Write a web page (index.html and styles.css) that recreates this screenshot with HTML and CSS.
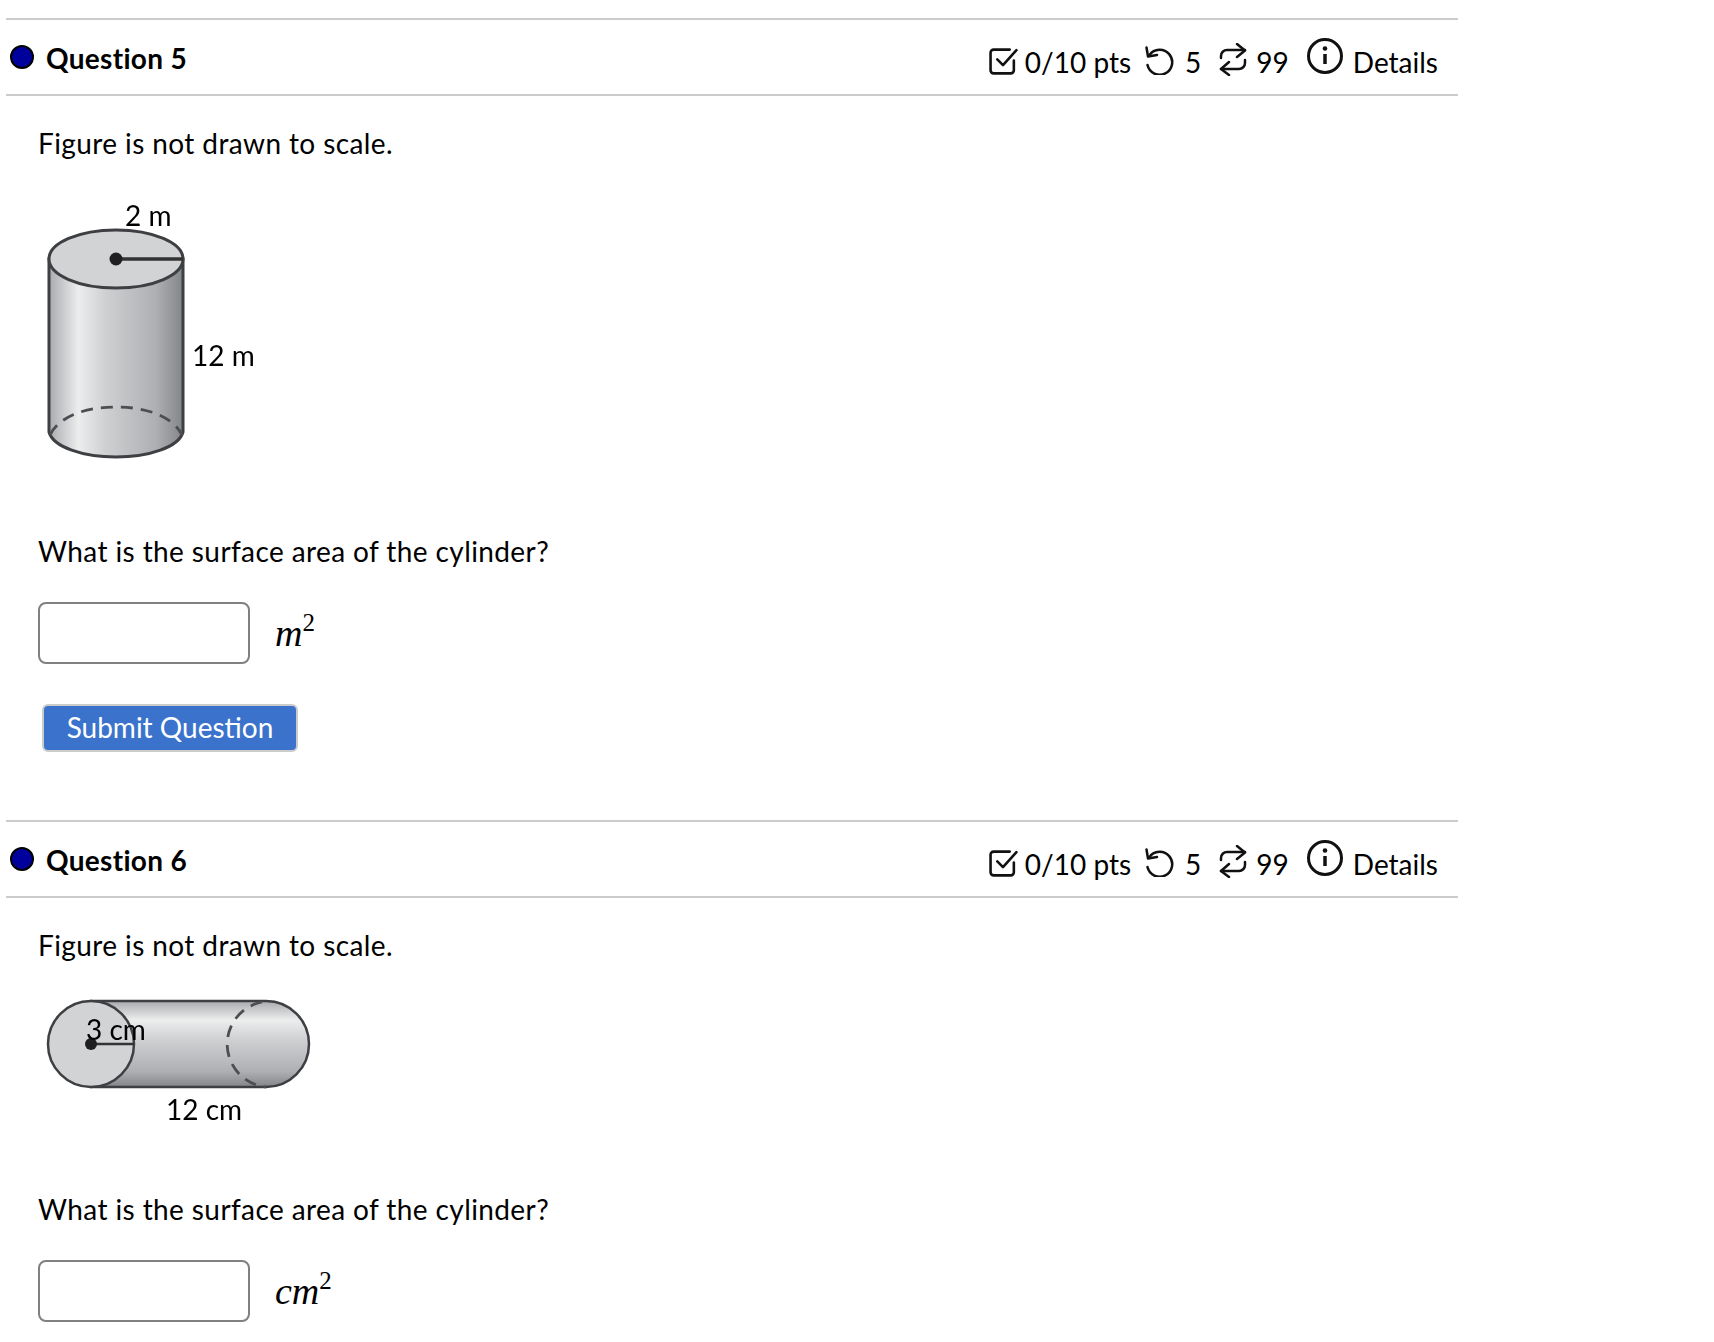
FILE: index.html
```html
<!DOCTYPE html>
<html lang="en">
<head>
<meta charset="utf-8">
<title>Questions</title>
<link rel="stylesheet" href="styles.css">
</head>
<body>
<main class="page">
  <section class="question">
    <header class="qhead">
      <h2 class="qtitle"><span class="dot"></span>Question 5</h2>
      <div class="meta">
        <svg class="ic ic-check" viewBox="0 0 28 28"><path d="M24 13v9.500a3 3 0 0 1-3 3H4.500a3 3 0 0 1-3-3V5.500a3 3 0 0 1 3-3H20"/><path d="M8 12l5.500 5.500L26.500 3"/></svg>
        <span class="m1">0/10 pts</span>
        <svg class="ic ic-hist" viewBox="0 0 32 30"><path d="M6.500 10A12.500 12.500 0 1 1 4.500 20"/><path d="M3.500 2.500L5 11.500l9-1.500"/></svg>
        <span class="m2">5</span>
        <svg class="ic ic-rep" viewBox="0 0 28 33"><path d="M2 15v-2a6 6 0 0 1 6-6h18"/><path d="M18 1l8 6.500-8 6.500"/><path d="M26 17v3a6 6 0 0 1-6 6H2"/><path d="M10 19l-8 7 8 6"/></svg>
        <span class="m3">99</span>
        <svg class="ic ic-info" viewBox="0 0 36 36"><circle cx="18" cy="18" r="16.5"/><path class="ib" d="M18 16v10"/><circle class="id" cx="18" cy="10.500" r="2.300"/></svg>
        <span class="m4">Details</span>
      </div>
    </header>
    <div class="qbody">
      <p class="line">Figure is not drawn to scale.</p>
      <svg class="fig fig-a" viewBox="0 -6 230 276">
        <defs>
          <linearGradient id="cylv" x1="0" x2="1" y1="0" y2="0">
            <stop offset="0" stop-color="#a9abae"/><stop offset=".22" stop-color="#eceded"/><stop offset=".42" stop-color="#cfd0d2"/><stop offset=".8" stop-color="#adafb2"/><stop offset="1" stop-color="#838588"/>
          </linearGradient>
        </defs>
        <path class="body" d="M11 59V232C15 247 45 257 78 257S141 247 145 232V59Z" fill="url(#cylv)"/>
        <ellipse class="cap" cx="78" cy="59" rx="67" ry="29"/>
        <path class="dash" d="M12 235C22 215 50 207 78 207S134 215 144 235"/>
        <path class="rad" d="M78 59H145"/>
        <circle class="pin" cx="78" cy="59" r="6.500"/>
        <text class="lbl" x="87" y="26">2 m</text>
        <text class="lbl" x="154" y="166">12 m</text>
      </svg>
      <p class="line ask ask-a">What is the surface area of the cylinder?</p>
      <div class="answer">
        <input class="box" type="text" aria-label="Answer">
        <span class="math">m<sup>2</sup></span>
      </div>
      <button class="submit" type="button">Submit Question</button>
    </div>
  </section>

  <section class="question">
    <header class="qhead">
      <h2 class="qtitle"><span class="dot"></span>Question 6</h2>
      <div class="meta">
        <svg class="ic ic-check" viewBox="0 0 28 28"><path d="M24 13v9.500a3 3 0 0 1-3 3H4.500a3 3 0 0 1-3-3V5.500a3 3 0 0 1 3-3H20"/><path d="M8 12l5.500 5.500L26.500 3"/></svg>
        <span class="m1">0/10 pts</span>
        <svg class="ic ic-hist" viewBox="0 0 32 30"><path d="M6.500 10A12.500 12.500 0 1 1 4.500 20"/><path d="M3.500 2.500L5 11.500l9-1.500"/></svg>
        <span class="m2">5</span>
        <svg class="ic ic-rep" viewBox="0 0 28 33"><path d="M2 15v-2a6 6 0 0 1 6-6h18"/><path d="M18 1l8 6.500-8 6.500"/><path d="M26 17v3a6 6 0 0 1-6 6H2"/><path d="M10 19l-8 7 8 6"/></svg>
        <span class="m3">99</span>
        <svg class="ic ic-info" viewBox="0 0 36 36"><circle cx="18" cy="18" r="16.5"/><path class="ib" d="M18 16v10"/><circle class="id" cx="18" cy="10.500" r="2.300"/></svg>
        <span class="m4">Details</span>
      </div>
    </header>
    <div class="qbody">
      <p class="line">Figure is not drawn to scale.</p>
      <svg class="fig fig-b" viewBox="0 0 300 150">
        <defs>
          <linearGradient id="cylh" x1="0" x2="0" y1="0" y2="1">
            <stop offset="0" stop-color="#a9abae"/><stop offset=".22" stop-color="#eceded"/><stop offset=".45" stop-color="#cfd0d2"/><stop offset=".82" stop-color="#adafb2"/><stop offset="1" stop-color="#838588"/>
          </linearGradient>
        </defs>
        <path class="body thin" d="M53 16H228A43 43 0 0 1 228 102H53Z" fill="url(#cylh)"/>
        <circle class="cap thin" cx="53" cy="59" r="43"/>
        <path class="dash" d="M224 17A43 43 0 0 0 228 102"/>
        <path class="rad thin" d="M53 59H96"/>
        <circle class="pin" cx="53" cy="59" r="6"/>
        <text class="lbl" x="48" y="55">3 cm</text>
        <text class="lbl" x="128" y="135">12 cm</text>
      </svg>
      <p class="line ask ask-b">What is the surface area of the cylinder?</p>
      <div class="answer">
        <input class="box" type="text" aria-label="Answer">
        <span class="math">cm<sup>2</sup></span>
      </div>
    </div>
  </section>
</main>
</body>
</html>
```
FILE: styles.css
```css
* { box-sizing: border-box; }
html, body { margin: 0; padding: 0; background: #fff; }
body {
  font-family: "Lato", "Liberation Sans", sans-serif;
  font-size: 28px;
  letter-spacing: .4px;
  color: #000;
  overflow: hidden;
}
.page { width: 1458px; padding: 18px 0 0 6px; }
.question { height: 802px; }
.question:last-child { height: auto; }
.qhead {
  display: flex;
  justify-content: space-between;
  align-items: center;
  height: 78px;
  border-top: 2px solid #ccc;
  border-bottom: 2px solid #ccc;
  padding: 0 20px 0 4px;
}
.qtitle {
  display: flex;
  align-items: center;
  margin: 1px 0 0;
  font-size: 28px;
  font-weight: 700;
  line-height: 40px;
  letter-spacing: .3px;
}
.dot {
  width: 24px;
  height: 24px;
  margin-right: 12px;
  margin-bottom: 2px;
  border-radius: 50%;
  background: #00009c;
  border: 2px solid #000;
}
.meta { display: flex; align-items: center; line-height: 40px; padding-top: 9px; letter-spacing: 0; }
.ic { fill: none; stroke: #111; stroke-width: 2.500; stroke-linecap: round; stroke-linejoin: round; display: block; }
.ic-check { width: 29px; height: 29px; margin-right: 7px; }
.ic-hist { width: 32px; height: 30px; margin: 0 10px 4px 12px; }
.ic-rep { width: 28px; height: 33px; margin: 0 9px 4px 18px; }
.ic-info { width: 36px; height: 36px; margin: 0 10px 12px 18px; stroke-width: 3; }
.ic .id { fill: #111; stroke: none; }
.ic .ib { stroke-width: 3.500; stroke-linecap: butt; }
.qbody { padding: 28px 0 0 32px; }
.line { margin: 0; line-height: 38px; }
.fig { display: block; filter: blur(.3px); }
.fig-a { width: 230px; height: 276px; margin-top: 32px; }
.fig-b { width: 300px; height: 150px; margin-top: 21px; }
.ask-a { margin-top: 62px; }
.ask-b { margin-top: 55px; }
.answer { display: flex; align-items: center; margin-top: 32px; }
.box {
  width: 212px;
  height: 62px;
  border: 2px solid #808080;
  border-radius: 8px;
  background: #fff;
  padding: 0;
}
.math {
  font-family: "Liberation Serif", serif;
  font-style: italic;
  font-size: 38px;
  letter-spacing: 0;
  margin-left: 25px;
}
.math sup { font-style: normal; font-size: 25px; line-height: 0; vertical-align: 15px; }
.submit {
  display: block;
  width: 256px;
  height: 48px;
  margin: 40px 0 0 4px;
  background: #3b73cc;
  color: #fff;
  border: 2px solid #ccc;
  border-radius: 6px;
  font: inherit;
  letter-spacing: 0;
  padding: 0 0 2px;
}
.body { stroke: #3e3f42; stroke-width: 3; }
.cap { fill: #d2d3d5; stroke: #3e3f42; stroke-width: 3; }
.thin { stroke-width: 2.500; }
.dash { fill: none; stroke: #4d4e52; stroke-width: 2.800; stroke-dasharray: 12 8; }
.rad { stroke: #333; stroke-width: 3.500; }
.rad.thin { stroke-width: 2.500; }
.pin { fill: #1f1f21; }
.lbl { font-size: 28px; letter-spacing: 0; fill: #000; }
```
